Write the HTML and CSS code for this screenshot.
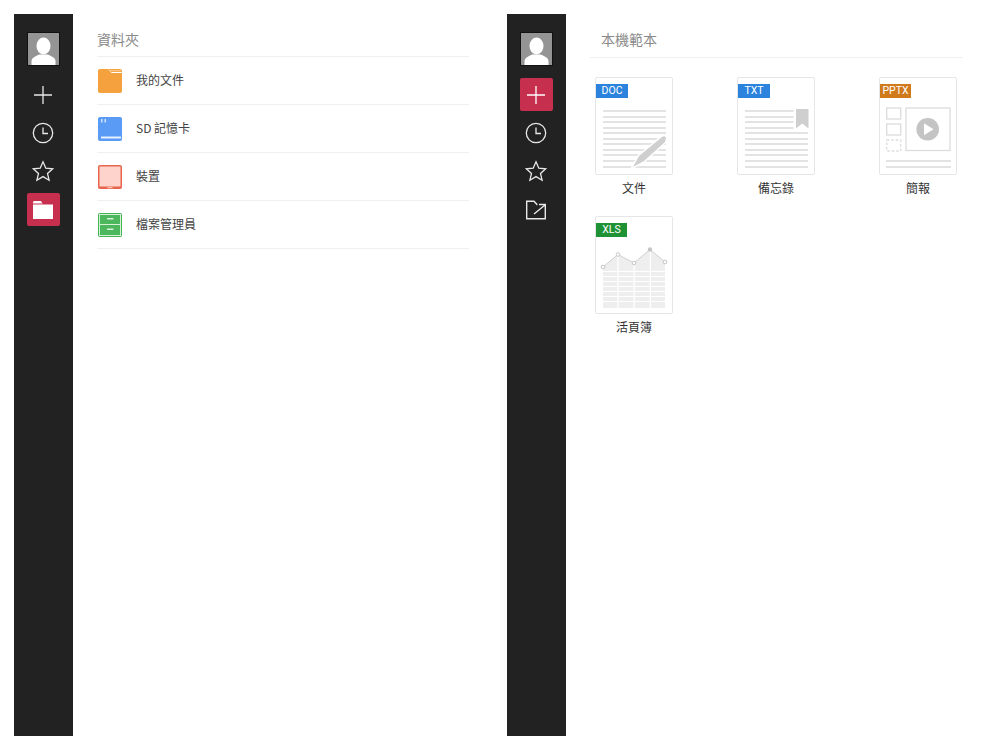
FILE: index.html
```html
<!DOCTYPE html>
<html lang="zh-Hant">
<head>
<meta charset="utf-8">
<title>資料夾</title>
<link rel="stylesheet" href="styles.css">
</head>
<body>
<div class="page">
  <section class="panel">
    <nav class="rail">
      <div class="avatar"><svg width="31" height="32" viewBox="0 0 31 32"><rect width="31" height="32" fill="#949494"/><ellipse cx="15.500" cy="13" rx="7" ry="8.500" fill="#fff"/><path d="M3.500 32v-4c0-3 4-5 8-6.500h8c4 1.500 8 3.500 8 6.500v4z" fill="#fff"/></svg></div>
      <div class="rail-btn"><svg width="20" height="20" viewBox="0 0 20 20"><path d="M10 1v18M1 10h18" stroke="#e8e8e8" stroke-width="1.300" fill="none"/></svg></div>
      <div class="rail-btn"><svg width="22" height="22" viewBox="0 0 22 22"><circle cx="11" cy="11" r="9.700" stroke="#e8e8e8" stroke-width="1.300" fill="none"/><path d="M11 5.500V11.500H16" stroke="#e8e8e8" stroke-width="1.300" fill="none"/></svg></div>
      <div class="rail-btn"><svg width="22" height="22" viewBox="0 0 22 22"><path d="M11 1.800l2.800 6.400 6.900.6-5.200 4.600 1.600 6.800-6.100-3.600-6.100 3.600 1.600-6.800L1.300 8.800l6.900-.6z" stroke="#e8e8e8" stroke-width="1.300" fill="none"/></svg></div>
      <div class="rail-btn active"><svg width="22" height="18" viewBox="0 0 22 18"><path d="M1 1.500C1 .7 1.500 0 2.500 0H9l1.500 2.500H1z" fill="#fff"/><rect x="1" y="3.500" width="20" height="14.500" fill="#fff"/></svg></div>
    </nav>
    <div class="content folders">
      <h2 class="title">資料夾</h2>
      <ul class="list">
        <li class="row"><svg class="row-icon" width="26" height="26" viewBox="0 0 26 26"><path d="M1 3C1 1.800 1.800 1 3 1h8l3.500 4H25v18c0 1.200-.8 2-2 2H3c-1.200 0-2-.8-2-2z" fill="#f4a13e"/><path d="M11.500 1H23c1.200 0 2 .8 2 2v1H14z" fill="#f4a13e"/><path d="M13 2.700h11.500" stroke="#fbd9ac" stroke-width=".8" fill="none"/></svg><span>我的文件</span></li>
        <li class="row"><svg class="row-icon" width="26" height="26" viewBox="0 0 26 26"><path d="M3 1h20c1.200 0 2 .8 2 2v20c0 1.200-.8 2-2 2H3c-1.200 0-2-.8-2-2V3c0-1.200.8-2 2-2z" fill="#5a9bf6"/><path d="M4 3h1.500v3.500H4zM7.500 3H9v3.500H7.500z" fill="#cfe1fb"/><rect x="4" y="20.500" width="20" height="2" fill="#e6f0fe"/></svg><span>SD 記憶卡</span></li>
        <li class="row"><svg class="row-icon" width="26" height="26" viewBox="0 0 26 26"><rect x="1" y="1" width="24" height="24" rx="2" fill="#e8654d"/><rect x="2.500" y="2.500" width="21" height="20" fill="#fdd3cc"/><rect x="10.500" y="23.200" width="5" height="1" fill="#fdd3cc"/></svg><span>裝置</span></li>
        <li class="row"><svg class="row-icon" width="26" height="26" viewBox="0 0 26 26"><rect x="1" y="1" width="24" height="24" rx="2" fill="#43b551"/><rect x="2" y="2" width="22" height="22" fill="#d6f1d8"/><rect x="3" y="3" width="20" height="9" fill="#4cb75c"/><rect x="3" y="13" width="20" height="10" fill="#4cb75c"/><rect x="10" y="6" width="6.500" height="1.500" fill="#d6f1d8"/><rect x="10" y="16.500" width="6.500" height="1.500" fill="#d6f1d8"/></svg><span>檔案管理員</span></li>
      </ul>
    </div>
  </section>
  <section class="panel">
    <nav class="rail">
      <div class="avatar"><svg width="31" height="32" viewBox="0 0 31 32"><rect width="31" height="32" fill="#949494"/><ellipse cx="15.500" cy="13" rx="7" ry="8.500" fill="#fff"/><path d="M3.500 32v-4c0-3 4-5 8-6.500h8c4 1.500 8 3.500 8 6.500v4z" fill="#fff"/></svg></div>
      <div class="rail-btn active"><svg width="20" height="20" viewBox="0 0 20 20"><path d="M10 1v18M1 10h18" stroke="#fff" stroke-width="1.300" fill="none"/></svg></div>
      <div class="rail-btn"><svg width="22" height="22" viewBox="0 0 22 22"><circle cx="11" cy="11" r="9.700" stroke="#e8e8e8" stroke-width="1.300" fill="none"/><path d="M11 5.500V11.500H16" stroke="#e8e8e8" stroke-width="1.300" fill="none"/></svg></div>
      <div class="rail-btn"><svg width="22" height="22" viewBox="0 0 22 22"><path d="M11 1.800l2.800 6.400 6.900.6-5.200 4.600 1.600 6.800-6.100-3.600-6.100 3.600 1.600-6.800L1.300 8.800l6.900-.6z" stroke="#e8e8e8" stroke-width="1.300" fill="none"/></svg></div>
      <div class="rail-btn"><svg width="22" height="22" viewBox="0 0 22 22"><path d="M12.500 5.500H12L9 2.200H1.700V19.800H20.300V12" stroke="#e8e8e8" stroke-width="1.400" fill="none"/><path d="M9 15L20 6M14 5.500H20.300V12" stroke="#e8e8e8" stroke-width="1.400" fill="none"/></svg></div>
    </nav>
    <div class="content templates">
      <h2 class="title">本機範本</h2>
      <div class="grid">
        <figure class="tpl">
          <div class="sheet">
            <svg width="78" height="98" viewBox="0 0 78 98">
              <g fill="#e3e3e3"><rect x="8" y="33" width="63" height="2"/><rect x="8" y="39" width="63" height="2"/><rect x="8" y="44" width="63" height="2"/><rect x="8" y="50" width="63" height="2"/><rect x="8" y="55" width="63" height="2"/><rect x="8" y="61" width="63" height="2"/><rect x="8" y="66" width="63" height="2"/><rect x="8" y="72" width="63" height="2"/><rect x="8" y="77" width="63" height="2"/><rect x="8" y="83" width="63" height="2"/><rect x="8" y="89" width="63" height="2"/></g>
              <path d="M38 90L44 79L67 60Q70 58 71 61L70 65L49 84Z" fill="#cfcfcf" stroke="#fff" stroke-width="3" paint-order="stroke"/>
            </svg>
            <span class="tag doc">DOC</span>
          </div>
          <figcaption>文件</figcaption>
        </figure>
        <figure class="tpl">
          <div class="sheet">
            <svg width="78" height="98" viewBox="0 0 78 98">
              <g fill="#e3e3e3"><rect x="8" y="33" width="48.500" height="2"/><rect x="8" y="39" width="48.500" height="2"/><rect x="8" y="44" width="48.500" height="2"/><rect x="8" y="50" width="48.500" height="2"/><rect x="8" y="55" width="63" height="2"/><rect x="8" y="61" width="63" height="2"/><rect x="8" y="66" width="63" height="2"/><rect x="8" y="72" width="63" height="2"/><rect x="8" y="77" width="63" height="2"/><rect x="8" y="83" width="63" height="2"/><rect x="8" y="89" width="63" height="2"/></g>
              <path d="M59 32h12.500v19.500l-6.250-5-6.250 5z" fill="#cfcfcf"/>
            </svg>
            <span class="tag txt">TXT</span>
          </div>
          <figcaption>備忘錄</figcaption>
        </figure>
        <figure class="tpl">
          <div class="sheet">
            <svg width="78" height="98" viewBox="0 0 78 98">
              <g fill="none" stroke="#dcdcdc" stroke-width="1.300"><rect x="7.700" y="31" width="14" height="11"/><rect x="7.700" y="47" width="14" height="11"/><rect x="7.700" y="63" width="14" height="11" stroke-dasharray="2.500 2"/><rect x="27" y="31" width="44" height="42.500"/></g>
              <circle cx="48.700" cy="52.300" r="11.300" fill="#c4c4c4"/><path d="M45 46.300l9.500 6-9.500 6z" fill="#fff"/>
              <rect x="7" y="83" width="65" height="2" fill="#e3e3e3"/><rect x="7" y="89" width="65" height="2" fill="#e3e3e3"/>
            </svg>
            <span class="tag ppt">PPTX</span>
          </div>
          <figcaption>簡報</figcaption>
        </figure>
        <figure class="tpl">
          <div class="sheet">
            <svg width="78" height="98" viewBox="0 0 78 98">
              <path d="M8 51L23 38.500L39 47L55 33.500L70 46V92H8z" fill="#eeeeee"/>
              <g fill="#fff"><rect x="22.300" y="36" width="1.300" height="56"/><rect x="38.500" y="36" width="1.300" height="56"/><rect x="54.700" y="30" width="1.300" height="62"/><rect x="8" y="55" width="63" height="1"/><rect x="8" y="60" width="63" height="1"/><rect x="8" y="65" width="63" height="1"/><rect x="8" y="70" width="63" height="1"/><rect x="8" y="75" width="63" height="1"/><rect x="8" y="80" width="63" height="1"/><rect x="8" y="85" width="63" height="1"/></g>
              <path d="M8 51L23 38.500L39 47L55 33.500L70 46" fill="none" stroke="#cfcfcf" stroke-width="1"/>
              <g fill="#fff" stroke="#c6c6c6"><circle cx="8" cy="51" r="1.800"/><circle cx="23" cy="38.500" r="1.800"/><circle cx="39" cy="47" r="1.800"/><circle cx="70" cy="46" r="1.800"/></g>
              <circle cx="55" cy="33.500" r="2.200" fill="#c6c6c6"/>
            </svg>
            <span class="tag xls">XLS</span>
          </div>
          <figcaption>活頁簿</figcaption>
        </figure>
      </div>
    </div>
  </section>
</div>
</body>
</html>
```
FILE: styles.css
```css
* { box-sizing: border-box; }
html, body { margin: 0; padding: 0; background: #fff; }
body {
  font-family: "Noto Sans CJK TC", "Noto Sans", "Liberation Sans", sans-serif;
  color: #333;
}
.page {
  display: flex;
  gap: 14px;
  width: 1000px;
  height: 750px;
  padding: 14px;
}
.panel { display: flex; flex: 0 0 479px; height: 722px; }
.rail {
  flex: 0 0 59px;
  background: #222222;
  display: flex;
  flex-direction: column;
  align-items: center;
  padding-top: 18px;
  gap: 5.300px;
}
.avatar { width: 33px; height: 34px; margin-bottom: 7px; border: 1px solid #111; display: flex; overflow: hidden; }
.rail-btn {
  width: 33px;
  height: 33px;
  display: flex;
  align-items: center;
  justify-content: center;
  border-radius: 2px;
}
.rail-btn svg { margin-left: -1px; }
.rail-btn.active { background: #c62f4e; }
.content { flex: 1; min-width: 0; }
.folders { padding-left: 24px; padding-right: 24px; }
.templates { padding-left: 24px; padding-right: 23px; }
.title {
  margin: 0;
  height: 43px;
  padding-top: 13px;
  font-size: 14px;
  line-height: 24px;
  font-weight: 400;
  color: #8a8a8a;
  border-bottom: 1px solid #f0f0f0;
}
.templates .title { padding-left: 11px; height: 44px; }
.list { list-style: none; margin: 0; padding: 0; }
.row {
  display: flex;
  align-items: center;
  height: 48px;
  gap: 13px;
  font-size: 12px;
  color: #444;
  border-bottom: 1px solid #f0f0f0;
}
.row span { padding-bottom: 2px; }
.row-icon { flex: none; }
.grid {
  display: grid;
  grid-template-columns: repeat(3, 78px);
  column-gap: 64px;
  row-gap: 19px;
  padding: 19px 0 0 5px;
}
.tpl { margin: 0; width: 78px; }
.sheet {
  position: relative;
  width: 78px;
  height: 98px;
  border: 1px solid #e6e6e6;
  border-radius: 2px;
  background: #fff;
  overflow: hidden;
}
.sheet svg { display: block; margin: -1px 0 0 -1px; }
.tag {
  position: absolute;
  top: 6px;
  left: 0;
  width: 32px;
  height: 14px;
  font-family: Roboto, "Liberation Sans", sans-serif;
  font-size: 10.500px;
  line-height: 14px;
  text-align: center;
  color: #fff;
}
.doc, .txt { background: #2b83dd; }
.ppt { background: #d07a1c; width: 31px; }
.xls { background: #1f9236; width: 31px; }
figcaption {
  margin-top: 4px;
  height: 18px;
  font-size: 12px;
  line-height: 18px;
  text-align: center;
  color: #333;
}
```
